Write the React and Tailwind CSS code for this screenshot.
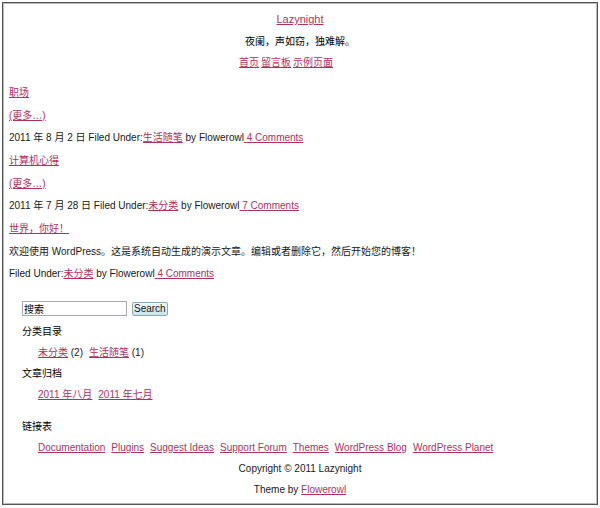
import React from "react";

function Link({ children }) {
  return (
    <a href="#" className="text-[#b03060] underline">
      {children}
    </a>
  );
}

function Post({ title, body, date, category, comments }) {
  return (
    <article>
      <h2 className="leading-[23px]">
        <Link>{title}</Link>
      </h2>
      <p className="leading-[23px]">{body}</p>
      <p className="leading-[22px]">
        {date}Filed Under:<Link>{category}</Link> by Flowerowl
        <Link>&nbsp;{comments} Comments</Link>
      </p>
    </article>
  );
}

const LINKS = [
  "Documentation",
  "Plugins",
  "Suggest Ideas",
  "Support Forum",
  "Themes",
  "WordPress Blog",
  "WordPress Planet",
];

export default function App() {
  return (
    <div className="bg-white px-[2px] py-[2px] font-['Liberation_Sans','Noto_Sans_CJK_SC',sans-serif] text-[10px] text-[#181818]">
      <div className="border border-[#555] px-[6px] pb-1 shadow-[inset_0_0_0_1px_#b8b8b8]">
        <header className="pt-[5px] text-center">
          <h1 className="text-[11px] leading-[23px]">
            <Link>Lazynight</Link>
          </h1>
          <p className="leading-[21px] text-black">夜阑，声如窃，独难解。</p>
          <nav className="flex justify-center gap-[2px] pr-7 leading-[21px]">
            <Link>首页</Link>
            <Link>留言板</Link>
            <Link>示例页面</Link>
          </nav>
        </header>

        <main className="pt-2">
          <Post
            title="职场"
            body={<Link>(更多…)</Link>}
            date="2011 年 8 月 2 日 "
            category="生活随笔"
            comments="4"
          />
          <Post
            title="计算机心得"
            body={<Link>(更多…)</Link>}
            date="2011 年 7 月 28 日 "
            category="未分类"
            comments="7"
          />
          <Post
            title="世界，你好！"
            body="欢迎使用 WordPress。这是系统自动生成的演示文章。编辑或者删除它，然后开始您的博客！"
            date=""
            category="未分类"
            comments="4"
          />
        </main>

        <aside className="px-[13px] pt-4 leading-[21px]">
          <form className="mb-[5px] flex items-center gap-[5px]" onSubmit={(e) => e.preventDefault()}>
            <input
              type="text"
              aria-label="搜索"
              defaultValue="搜索"
              className="h-[15px] w-[105px] border border-[#a5a9ad] bg-white px-px text-[10px] leading-[13px] text-black"
            />
            <button
              type="submit"
              className="h-[14px] rounded-[2px] border border-[#8aa9b8] bg-gradient-to-b from-[#f0f8fa] to-[#c8e4ec] px-px text-[10px] leading-[12px]"
            >
              Search
            </button>
          </form>
          <h2 className="text-black">分类目录</h2>
          <ul className="flex gap-[6px] pl-4">
            <li>
              <Link>未分类</Link> (2)
            </li>
            <li>
              <Link>生活随笔</Link> (1)
            </li>
          </ul>
          <h2 className="text-black">文章归档</h2>
          <ul className="flex gap-[6px] pl-4">
            <li>
              <Link>2011 年八月</Link>
            </li>
            <li>
              <Link>2011 年七月</Link>
            </li>
          </ul>
          <h2 className="pt-[11px] text-black">链接表</h2>
          <ul className="flex flex-wrap gap-x-[6px] pl-4">
            {LINKS.map((name) => (
              <li key={name}>
                <Link>{name}</Link>
              </li>
            ))}
          </ul>
        </aside>

        <footer className="text-center leading-[21px]">
          <p>Copyright © 2011 Lazynight</p>
          <p>
            Theme by <Link>Flowerowl</Link>
          </p>
        </footer>
      </div>
    </div>
  );
}
